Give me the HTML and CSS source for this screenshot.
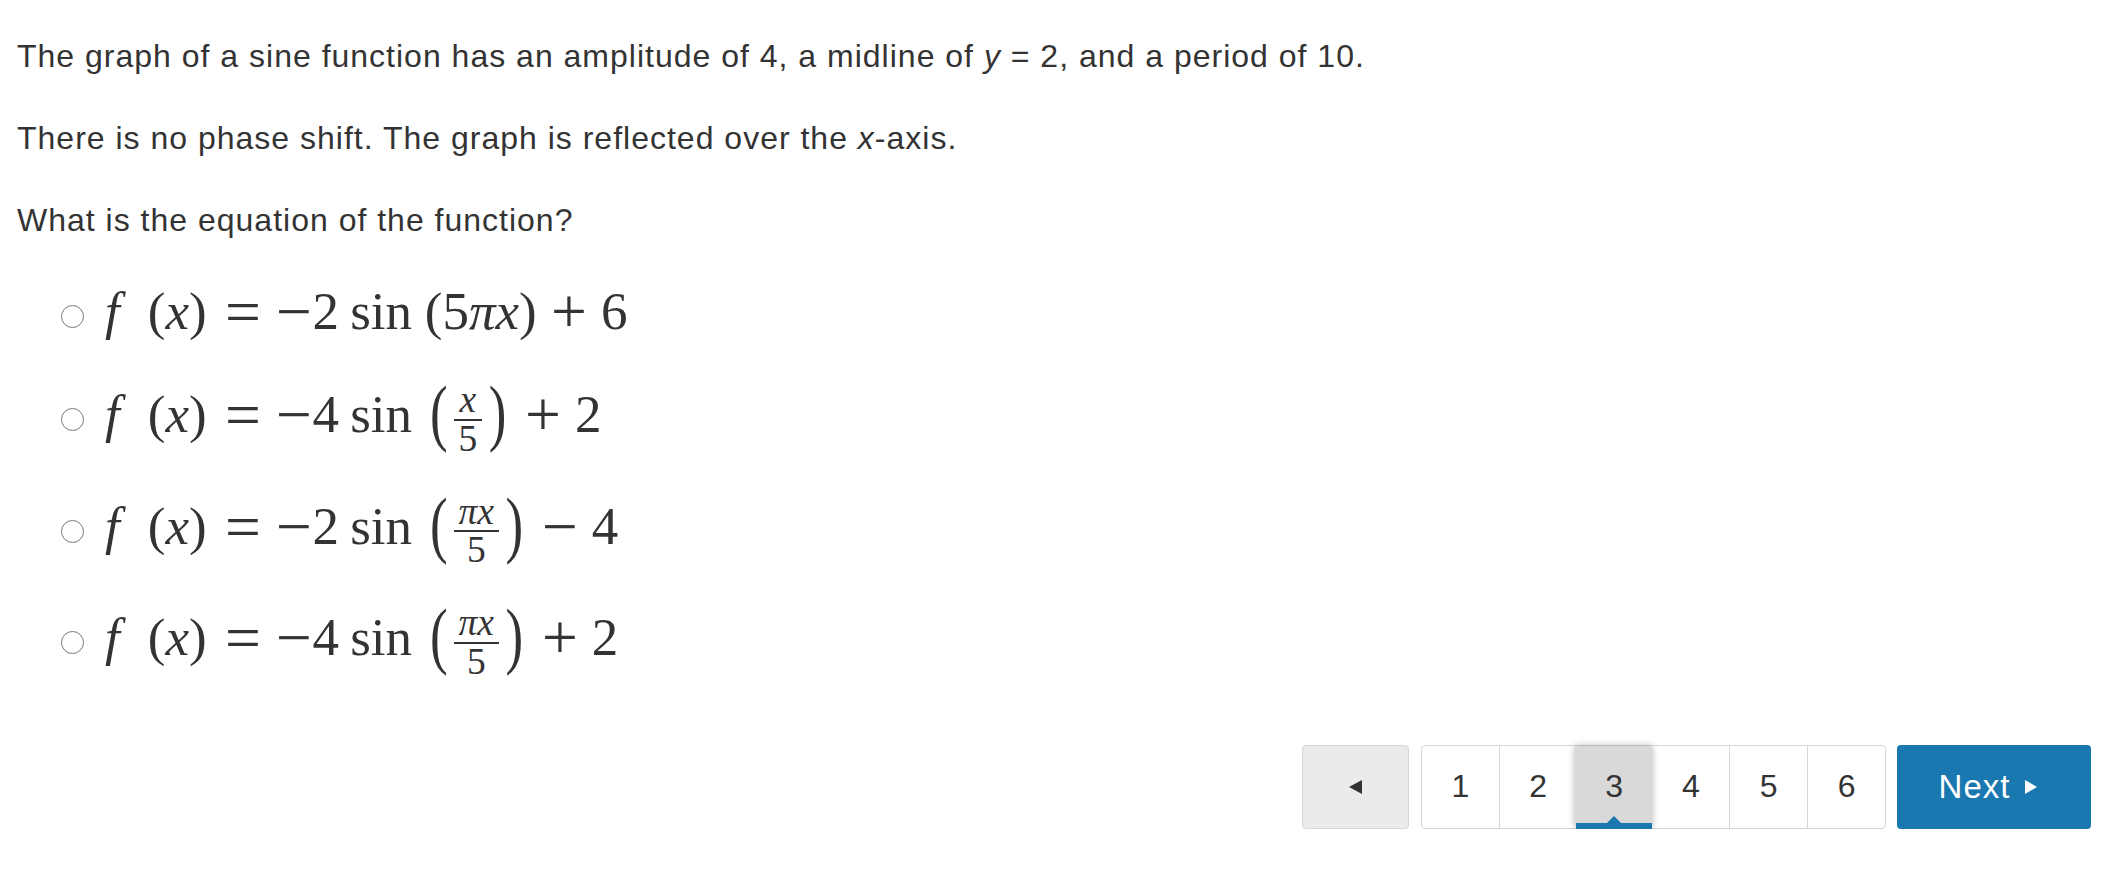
FILE: index.html
```html
<!DOCTYPE html>
<html lang="en">
<head>
<meta charset="utf-8">
<title>Sine function question</title>
<link rel="stylesheet" href="styles.css">
</head>
<body>
<main class="page">
  <div class="question">
    <p>The graph of a sine function has an amplitude of 4, a midline of <i>y</i> = 2, and a period of 10.</p>
    <p>There is no phase shift. The graph is reflected over the <i>x</i>-axis.</p>
    <p>What is the equation of the function?</p>
  </div>

  <ul class="choices">
    <li class="choice plain"><span class="radio"></span><span class="math"><span class="mi f">f</span><span class="mo">(</span><span class="mi">x</span><span class="mo">)</span><span class="rel">=</span><span class="neg">−</span><span class="mn">2</span><span class="op">sin</span><span class="mo">(</span><span class="mn">5</span><span class="mi">π</span><span class="mi">x</span><span class="mo">)</span><span class="bin">+</span><span class="mn">6</span></span></li>

    <li class="choice"><span class="radio"></span><span class="math"><span class="mi f">f</span><span class="mo">(</span><span class="mi">x</span><span class="mo">)</span><span class="rel">=</span><span class="neg">−</span><span class="mn">4</span><span class="op">sin</span><span class="big open">(</span><span class="frac"><span class="num"><span class="mi">x</span></span><span class="den">5</span></span><span class="big close">)</span><span class="bin">+</span><span class="mn">2</span></span></li>

    <li class="choice"><span class="radio"></span><span class="math"><span class="mi f">f</span><span class="mo">(</span><span class="mi">x</span><span class="mo">)</span><span class="rel">=</span><span class="neg">−</span><span class="mn">2</span><span class="op">sin</span><span class="big open">(</span><span class="frac"><span class="num"><span class="mi">π</span><span class="mi">x</span></span><span class="den">5</span></span><span class="big close">)</span><span class="bin">−</span><span class="mn">4</span></span></li>

    <li class="choice"><span class="radio"></span><span class="math"><span class="mi f">f</span><span class="mo">(</span><span class="mi">x</span><span class="mo">)</span><span class="rel">=</span><span class="neg">−</span><span class="mn">4</span><span class="op">sin</span><span class="big open">(</span><span class="frac"><span class="num"><span class="mi">π</span><span class="mi">x</span></span><span class="den">5</span></span><span class="big close">)</span><span class="bin">+</span><span class="mn">2</span></span></li>
  </ul>

  <nav class="pager">
    <button class="prev" type="button" aria-label="Previous">
      <svg width="13" height="14" viewBox="0 0 13 14"><polygon points="13,0 13,14 0,7" fill="#333"/></svg>
    </button>
    <div class="pages">
      <span class="pg">1</span>
      <span class="pg">2</span>
      <span class="pg active">3</span>
      <span class="pg">4</span>
      <span class="pg">5</span>
      <span class="pg">6</span>
    </div>
    <button class="next" type="button">
      <span>Next</span>
      <svg width="12" height="14" viewBox="0 0 12 14"><polygon points="0,0 12,7 0,14" fill="#fff"/></svg>
    </button>
  </nav>
</main>
</body>
</html>
```

FILE: styles.css
```css
html, body {
  margin: 0;
  padding: 0;
  background: #fff;
}

body {
  font-family: "Liberation Sans", Arial, Helvetica, sans-serif;
  color: #333;
}

.page {
  width: 2112px;
}

.question {
  padding: 35px 17px 0;
}

.question p {
  margin: 0 0 40px;
  font-size: 32px;
  letter-spacing: 1px;
  line-height: 42px;
}

.question p:last-child {
  margin-bottom: 0;
}

.choices {
  list-style: none;
  margin: 36px 0 0;
  padding: 0;
  display: flex;
  flex-direction: column;
  gap: 29px;
}

.choice {
  padding-left: 61px;
  font-family: "Liberation Serif", "Times New Roman", serif;
  font-size: 53px;
  line-height: 80px;
  color: #333;
  white-space: nowrap;
}

.choice.plain {
  line-height: 68px;
}

.radio {
  display: inline-block;
  width: 21px;
  height: 21px;
  border: 1.5px solid #777;
  border-radius: 50%;
  vertical-align: middle;
  margin-right: 21px;
}

.math .mi {
  font-style: italic;
}

.math .f {
  margin-right: 0.53em;
}

.math .rel,
.math .neg,
.math .bin {
  display: inline-block;
  line-height: 1;
  transform: scale(1.2);
}

.math .rel {
  margin: 0 0.35em 0 0.4em;
}

.math .neg {
  margin: 0 0.06em;
}

.math .op {
  margin: 0 0.24em 0 0.21em;
}

.math .bin {
  margin: 0 0.32em 0 0.33em;
}

.math .big {
  display: inline-block;
  line-height: 1;
  transform: scaleY(1.38);
  transform-origin: 50% 30px;
}

.math .big.open {
  margin-left: 0.1em;
  margin-right: 0.05em;
}

.math .big.close {
  margin-left: 0.06em;
  margin-right: 0.08em;
}

.frac {
  display: inline-flex;
  flex-direction: column;
  align-items: stretch;
  text-align: center;
  vertical-align: 20px;
  font-size: 37.5px;
  padding: 0 0.1em;
}

.frac .num {
  line-height: 1;
  padding: 0 0.12em;
  border-bottom: 2px solid #333;
}

.frac .den {
  line-height: 0.96;
  padding: 0 0.12em;
}

/* Pager */
.pager {
  display: flex;
  justify-content: flex-end;
  align-items: stretch;
  margin-top: 65px;
  padding-right: 21px;
  height: 84px;
  font-family: "Liberation Sans", Arial, Helvetica, sans-serif;
}

.prev {
  width: 107px;
  height: 84px;
  margin-right: 12px;
  background: #ebebeb;
  border: 1.5px solid #d6d6d6;
  border-radius: 4px;
  padding: 0;
  display: flex;
  align-items: center;
  justify-content: center;
}

.pages {
  display: flex;
  width: 465px;
  box-sizing: border-box;
  border: 1.5px solid #d6d6d6;
  border-radius: 4px;
  background: #fff;
  margin-right: 11px;
}

.pg {
  flex: 1;
  display: flex;
  align-items: center;
  justify-content: center;
  font-size: 32px;
  color: #333;
  border-left: 1.5px solid #d6d6d6;
  position: relative;
}

.pg:first-child {
  border-left: none;
}

.pg.active {
  background: #d9d9d9;
  border-left-color: transparent;
  box-shadow: 0 0 7px rgba(0, 0, 0, 0.3);
  z-index: 1;
  margin-left: -2px;
  margin-right: -1px;
}

.pg.active + .pg {
  border-left-color: transparent;
}

.pg.active::after {
  content: "";
  position: absolute;
  left: 0;
  right: 0;
  bottom: -1px;
  height: 6px;
  background: #1a77b0;
}

.pg.active::before {
  content: "";
  position: absolute;
  left: 50%;
  bottom: 4px;
  margin-left: -8px;
  border-left: 8px solid transparent;
  border-right: 8px solid transparent;
  border-bottom: 8px solid #1a77b0;
}

.next {
  width: 194px;
  height: 84px;
  background: #1a78b0;
  border: none;
  border-radius: 4px;
  color: #fff;
  font-family: "Liberation Sans", Arial, Helvetica, sans-serif;
  font-size: 33px;
  letter-spacing: 1px;
  display: flex;
  align-items: center;
  justify-content: center;
  gap: 15px;
  padding: 0 12px 0 0;
}
```
